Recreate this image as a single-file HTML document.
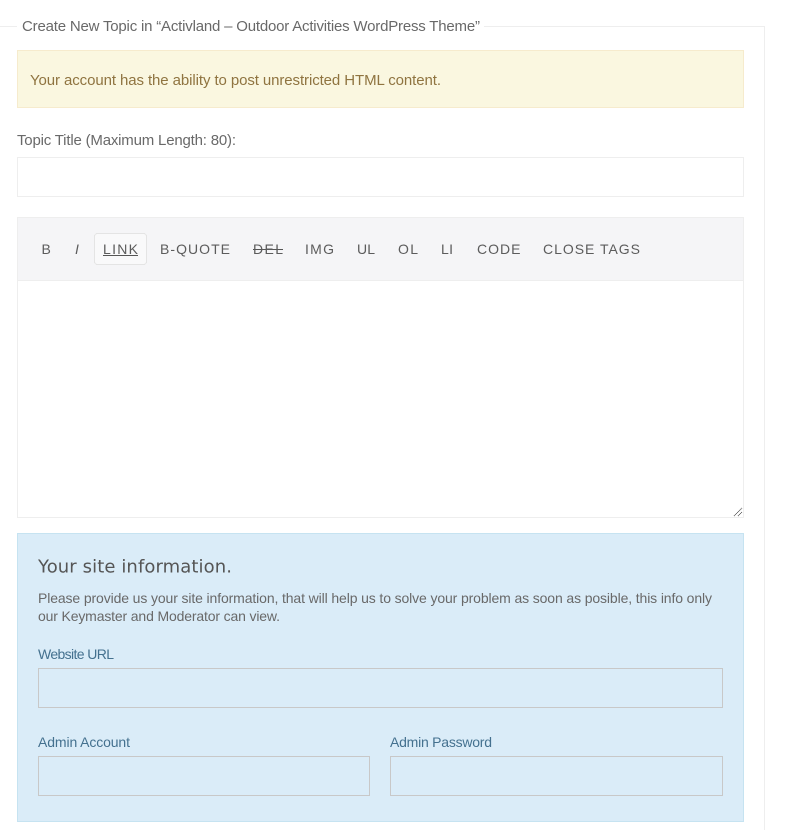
<!DOCTYPE html>
<html><head><meta charset="utf-8"><style>
html,body{margin:0;padding:0;background:#fff}
body{width:792px;height:830px;overflow:hidden;position:relative}
svg{position:absolute;left:0;top:0}
text{font-family:"Liberation Sans",sans-serif;font-size:15px;fill:#696969}
.t{font-size:14px;fill:#5c5c5c}
.s{font-size:14px}
.l{font-size:14px;fill:#44718f}
</style></head><body>
<svg width="792" height="830" viewBox="0 0 792 830" shape-rendering="crispEdges">
<rect x="0" y="26" width="17" height="1" fill="#eee"/>
<rect x="484" y="26" width="281" height="1" fill="#eee"/>
<rect x="764" y="26" width="1" height="804" fill="#eee"/>

<rect x="17.5" y="50.5" width="726" height="57" fill="#faf7e0" stroke="#f6ebcd"/>
<rect x="17.5" y="157.5" width="726" height="39" fill="#fff" stroke="#eee"/>
<rect x="17.5" y="217.5" width="726" height="300" fill="#fff" stroke="#eee"/>
<rect x="18" y="218" width="725" height="62" fill="#f5f5f7"/>
<rect x="18" y="280" width="725" height="1" fill="#eee"/>
<rect x="94.5" y="233.5" width="52" height="31" rx="3" fill="#f9f9fa" stroke="#e4e4e4"/>

<rect x="103" y="255" width="35" height="1" fill="#555"/>
<rect x="253" y="249" width="30" height="1" fill="#555"/>

<g stroke="#555" stroke-width="1" shape-rendering="auto">
<path d="M734 516L742 508M738 516L742 512" fill="none" stroke-dasharray="1 .5"/>
</g>

<rect x="17.5" y="533.5" width="726" height="288" fill="#daecf8" stroke="#c6e3f1"/>
<rect x="38.5" y="668.5" width="684" height="39" fill="#daecf8" stroke="#c8c8c8"/>
<rect x="38.5" y="756.5" width="331" height="39" fill="#daecf8" stroke="#c8c8c8"/>
<rect x="390.5" y="756.5" width="332" height="39" fill="#daecf8" stroke="#c8c8c8"/>

<g shape-rendering="auto">
<text x="22" y="31" textLength="458" lengthAdjust="spacing">Create New Topic in “Activland – Outdoor Activities WordPress Theme”</text>
<text x="30" y="85" textLength="411" lengthAdjust="spacing" style="fill:#8f7440">Your account has the ability to post unrestricted HTML content.</text>
<text x="17" y="145" textLength="219" lengthAdjust="spacing">Topic Title (Maximum Length: 80):</text>

<text class="t" x="41.5" y="254" textLength="9" lengthAdjust="spacing">B</text>
<text class="t" x="75" y="254" style="font-style:italic">I</text>
<text class="t" x="103" y="254" textLength="35" lengthAdjust="spacing">LINK</text>
<text class="t" x="160" y="254" textLength="70" lengthAdjust="spacing">B-QUOTE</text>
<text class="t" x="253" y="254" textLength="30" lengthAdjust="spacing">DEL</text>
<text class="t" x="305" y="254" textLength="29" lengthAdjust="spacing">IMG</text>
<text class="t" x="357" y="254" textLength="18" lengthAdjust="spacing">UL</text>
<text class="t" x="398" y="254" textLength="20" lengthAdjust="spacing">OL</text>
<text class="t" x="441" y="254" textLength="12" lengthAdjust="spacing">LI</text>
<text class="t" x="477" y="254" textLength="43.5" lengthAdjust="spacing">CODE</text>
<text class="t" x="543" y="254" textLength="97" lengthAdjust="spacing">CLOSE TAGS</text>

<text x="38" y="572.5" textLength="194" lengthAdjust="spacing" style="font-family:'DejaVu Sans',sans-serif;font-size:18px;fill:#555">Your site information.</text>
<text class="s" x="38" y="603" textLength="674" lengthAdjust="spacing">Please provide us your site information, that will help us to solve your problem as soon as posible, this info only</text>
<text class="s" x="38" y="621" textLength="242" lengthAdjust="spacing">our Keymaster and Moderator can view.</text>
<text class="l" x="38" y="659" textLength="76" lengthAdjust="spacing">Website URL</text>
<text class="l" x="38" y="747" textLength="92" lengthAdjust="spacing">Admin Account</text>
<text class="l" x="390" y="747" textLength="102" lengthAdjust="spacing">Admin Password</text>
</g>
</svg>
</body></html>
